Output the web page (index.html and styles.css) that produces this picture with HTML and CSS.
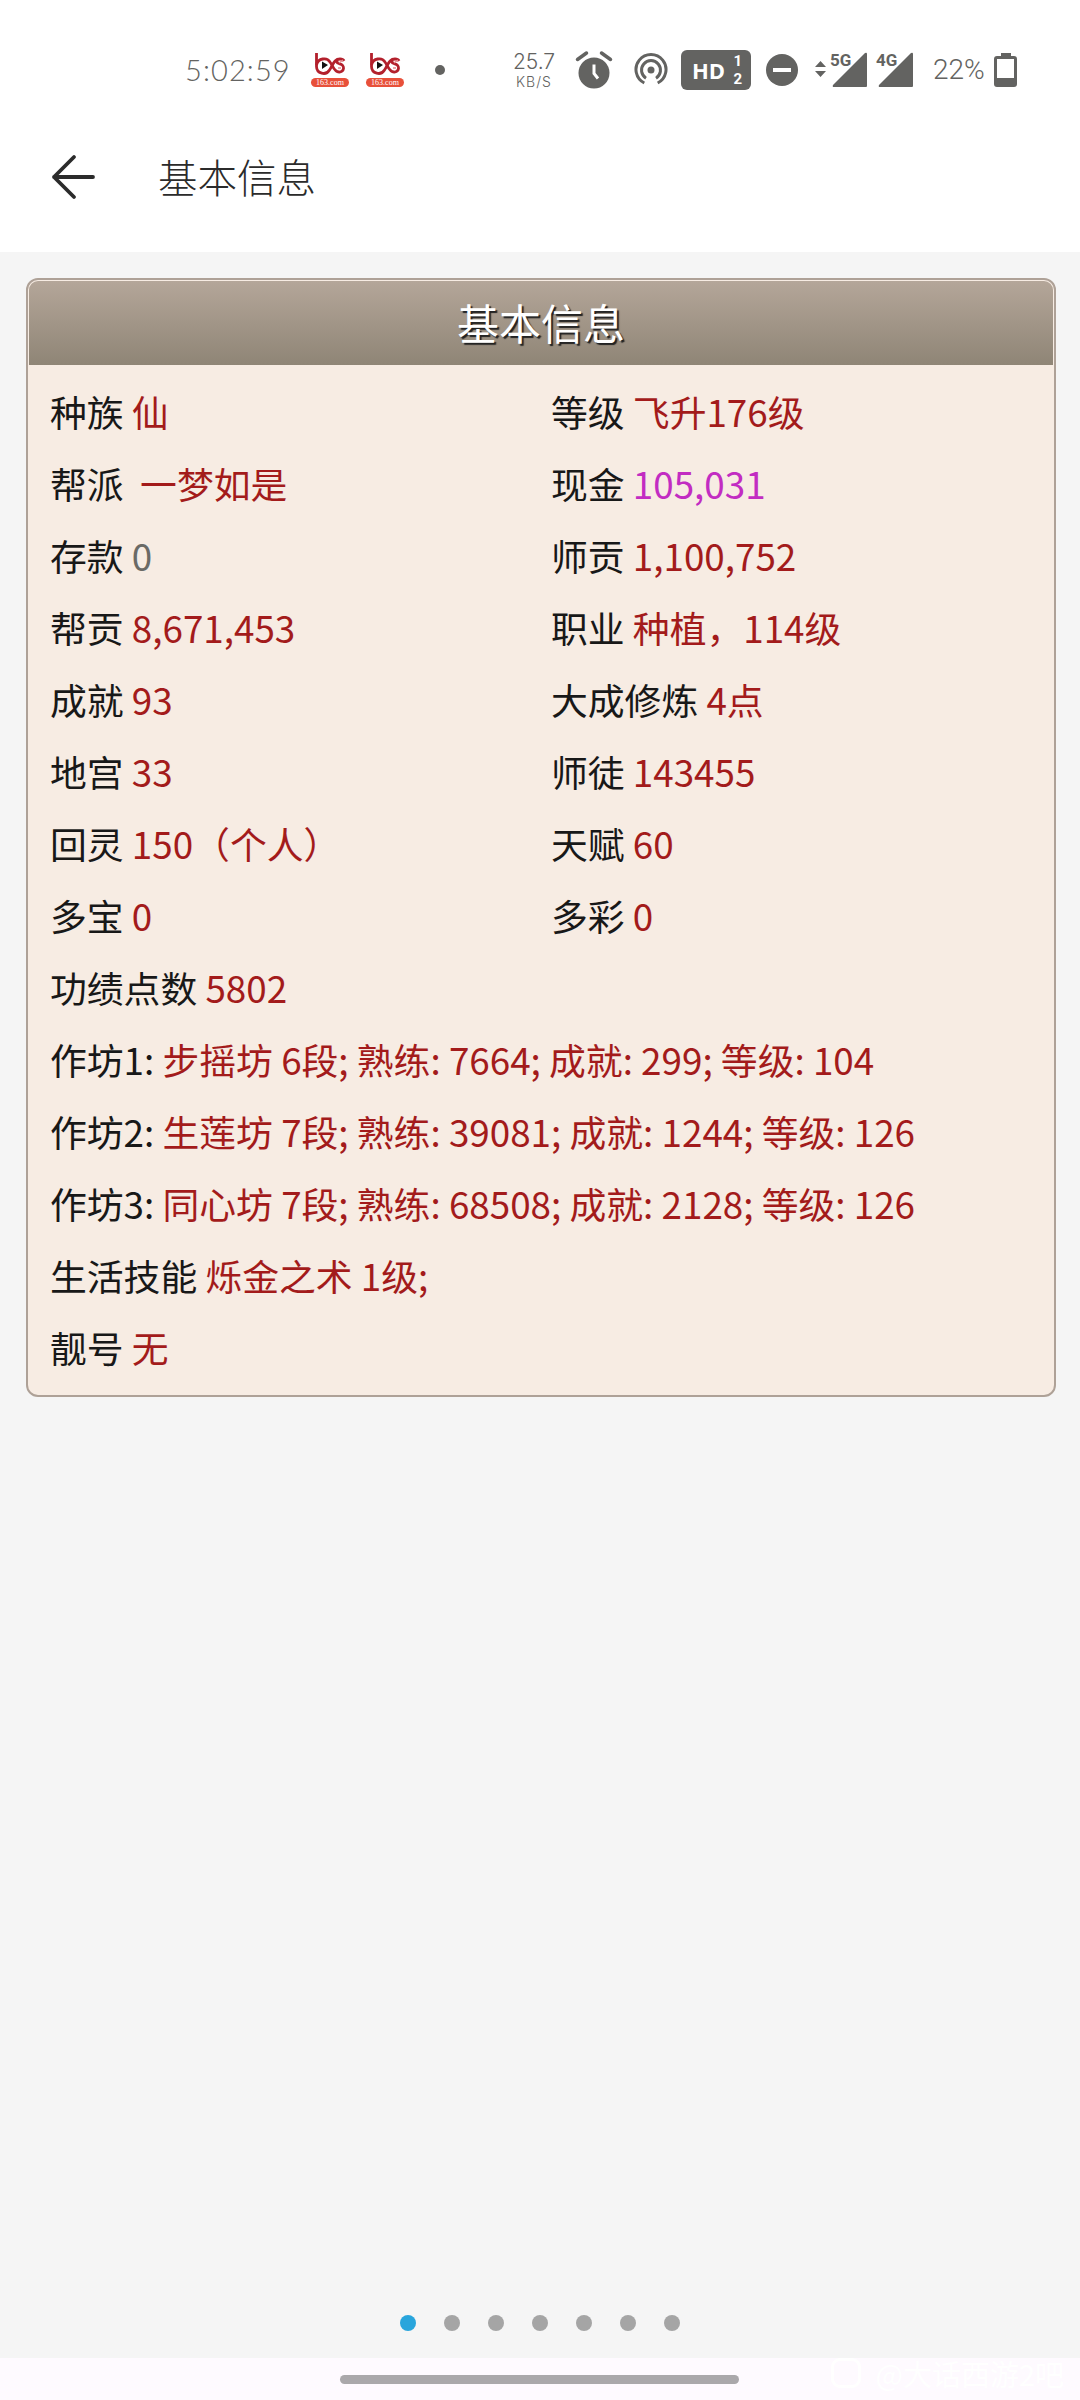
FILE: index.html
```html
<!DOCTYPE html>
<html lang="zh-CN">
<head>
  <meta charset="utf-8">
  <title>基本信息</title>
  <link rel="stylesheet" href="styles.css">
</head>
<body>
  <div class="status-bar">
    <span class="time">5:02:59</span>
    <svg class="app-icon" width="40" height="36" viewBox="0 0 40 36">
      <g fill="none" stroke="#b3202c" stroke-width="2.800">
        <path d="M6.500 1v13.500a7 7 0 0 0 13 3.500C23 13 24 7 30 7q3 0 4 2"/>
        <path d="M6.500 13C8 6 17 5 20 10c3 4 4 10 9 10a4 4 0 0 0 1-8q-3-1-4-3"/>
      </g>
      <path d="M12 9.500l6 3.500-6 4z" fill="#111"/>
      <path d="M29 11l4-3M28 16h3" stroke="#e58a90" stroke-width="1.500"/>
      <rect x="1" y="26" width="38" height="9" rx="4.500" fill="#e8503a"/>
      <text x="20" y="33" text-anchor="middle" class="app-name">163.com</text>
    </svg>
    <svg class="app-icon second" width="40" height="36" viewBox="0 0 40 36">
      <g fill="none" stroke="#b3202c" stroke-width="2.800">
        <path d="M6.500 1v13.500a7 7 0 0 0 13 3.500C23 13 24 7 30 7q3 0 4 2"/>
        <path d="M6.500 13C8 6 17 5 20 10c3 4 4 10 9 10a4 4 0 0 0 1-8q-3-1-4-3"/>
      </g>
      <path d="M12 9.500l6 3.500-6 4z" fill="#111"/>
      <path d="M29 11l4-3M28 16h3" stroke="#e58a90" stroke-width="1.500"/>
      <rect x="1" y="26" width="38" height="9" rx="4.500" fill="#e8503a"/>
      <text x="20" y="33" text-anchor="middle" class="app-name">163.com</text>
    </svg>
    <span class="more-dot"></span>
    <div class="speed"><span class="num">25.7</span><span class="unit">KB/S</span></div>
    <svg class="alarm" width="38" height="40" viewBox="0 0 38 40">
      <circle cx="19" cy="23" r="15.500" fill="#636361"/>
      <path d="M2.500 9.500L11.500 3M26.500 3l9 6.500" stroke="#636361" stroke-width="3.500" stroke-linecap="round"/>
      <path d="M19 14.500v9l4 5" fill="none" stroke="#fff" stroke-width="3"/>
    </svg>
    <svg class="hotspot" width="34" height="34" viewBox="0 0 34 34" fill="none" stroke="#636361" stroke-width="3">
      <path d="M10.300 30A15 15 0 1 1 23.700 30"/>
      <path d="M12 25.200A9.500 9.500 0 1 1 22 25.200"/>
      <circle cx="17" cy="17" r="3.500" fill="#636361" stroke="none"/>
    </svg>
    <div class="hd"><b>HD</b><span class="sims"><i>1</i><i>2</i></span></div>
    <span class="dnd"></span>
    <svg class="signal" width="102" height="46" viewBox="0 -5 102 46" fill="#636361">
      <path d="M0 15l5.500-6 5.500 6zM0 19h11l-5.500 6z"/>
      <path d="M52 2v32q0 1-1 1H19q-2 0-1-2L50 1q2-1 2 1z"/>
      <path d="M98 2v32q0 1-1 1H65q-2 0-1-2L96 1q2-1 2 1z"/>
      <text x="15" y="14" class="net">5G</text>
      <text x="61" y="14" class="net">4G</text>
    </svg>
    <span class="percent">22%</span>
    <svg class="battery" width="24" height="36" viewBox="0 0 24 36">
      <path d="M7 1h10v3h3q3 0 3 3v25q0 3-3 3H3q-3 0-3-3V7q0-3 3-3h4z" fill="#636361"/>
      <rect x="3" y="7" width="17" height="19" fill="#fff"/>
    </svg>
  </div>

  <div class="title-bar">
    <svg width="46" height="48" viewBox="0 0 46 48" fill="none" stroke="#2b2b2b" stroke-width="3.800" stroke-linecap="round" stroke-linejoin="round">
      <path d="M42 24H3M23 4L3 24l20 20"/>
    </svg>
    <span class="page-title">基本信息</span>
  </div>

  <div class="content">
    <div class="card">
      <h2>基本信息</h2>
      <div class="info">
        <div>种族 <em>仙</em></div>
        <div>等级 <em>飞升176级</em></div>
        <div>帮派 <em>&nbsp;一梦如是</em></div>
        <div>现金 <em class="purple">105,031</em></div>
        <div>存款 <em class="gray">0</em></div>
        <div>师贡 <em>1,100,752</em></div>
        <div>帮贡 <em>8,671,453</em></div>
        <div>职业 <em>种植，114级</em></div>
        <div>成就 <em>93</em></div>
        <div>大成修炼 <em>4点</em></div>
        <div>地宫 <em>33</em></div>
        <div>师徒 <em>143455</em></div>
        <div>回灵 <em>150（个人）</em></div>
        <div>天赋 <em>60</em></div>
        <div>多宝 <em>0</em></div>
        <div>多彩 <em>0</em></div>
        <div class="wide">功绩点数 <em>5802</em></div>
        <div class="wide">作坊1: <em>步摇坊 6段; 熟练: 7664; 成就: 299; 等级: 104</em></div>
        <div class="wide">作坊2: <em>生莲坊 7段; 熟练: 39081; 成就: 1244; 等级: 126</em></div>
        <div class="wide">作坊3: <em>同心坊 7段; 熟练: 68508; 成就: 2128; 等级: 126</em></div>
        <div class="wide">生活技能 <em>烁金之术 1级;</em></div>
        <div class="wide">靓号 <em>无</em></div>
      </div>
    </div>
    <div class="dots">
      <span class="active"></span><span></span><span></span><span></span><span></span><span></span><span></span>
    </div>
  </div>

  <div class="nav-bar">
    <span class="handle"></span>
    <div class="watermark"><span class="logo"></span>@大话西游2吧</div>
  </div>
</body>
</html>
```
FILE: styles.css
```css
* {
  box-sizing: border-box;
}
body {
  margin: 0;
  width: 1080px;
  height: 2400px;
  display: flex;
  flex-direction: column;
  overflow: hidden;
  background-color: #fff;
  font-family: "Noto Sans CJK SC", sans-serif;
}

/* status bar */
.status-bar {
  display: flex;
  align-items: center;
  height: 138px;
  padding: 2px 0 0 185px;
  color: #636361;
  flex: none;
}
.status-bar > * {
  flex: none;
}
.time {
  width: 125px;
  font: 300 29px/36px Lato, sans-serif;
  letter-spacing: 1.1px;
}
.app-icon {
  margin-right: 15px;
}
.app-icon.second {
  margin-right: 30px;
}
.app-name {
  font: 8px "Liberation Serif", serif;
  fill: #fff;
}
.more-dot {
  width: 10px;
  height: 10px;
  border-radius: 50%;
  background-color: #636361;
}
.speed {
  width: 42px;
  margin-left: 68px;
  display: flex;
  flex-direction: column;
  align-items: center;
}
.speed .num {
  font: 300 21px/22px Inter, sans-serif;
}
.speed .unit {
  font: 300 14px/17px Inter, sans-serif;
  letter-spacing: 1px;
}
.alarm {
  margin-left: 20px;
}
.hotspot {
  margin-left: 21px;
}
.hd {
  width: 70px;
  height: 40px;
  margin-left: 13px;
  padding: 0 9px 0 11px;
  border-radius: 6px;
  background-color: #636361;
  color: #fff;
  display: flex;
  align-items: center;
  justify-content: space-between;
  font-family: "Open Sans", sans-serif;
  font-size: 22px;
}
.sims {
  display: flex;
  flex-direction: column;
}
.sims i {
  font: bold 15px/18px Roboto, sans-serif;
}
.dnd {
  width: 32px;
  height: 32px;
  margin-left: 15px;
  border-radius: 50%;
  background: linear-gradient(#fff, #fff) center / 18px 4px no-repeat #636361;
}
.signal {
  margin-left: 17px;
}
.net {
  font: bold 17px Roboto, sans-serif;
}
.percent {
  width: 60px;
  margin-left: 16px;
  font: 300 28px/36px Roboto, sans-serif;
}
.battery {
  margin-left: 1px;
}

/* title bar */
.title-bar {
  display: flex;
  align-items: center;
  height: 114px;
  padding: 0 0 36px 51px;
  flex: none;
}
.page-title {
  margin: -3px 0 0 61px;
  color: #2b2b2b;
  font-size: 39.5px;
  line-height: 60px;
  font-weight: 300;
}

/* content */
.content {
  flex: 1;
  display: flex;
  flex-direction: column;
  justify-content: space-between;
  align-items: center;
  padding: 26px 0 27px;
  background-color: #f5f5f5;
}
.card {
  width: 1030px;
  margin-left: 2px;
  border: 2px solid #aea197;
  border-radius: 12px;
  background-color: #f7ece3;
  padding: 1px;
}
.card h2 {
  margin: 0;
  height: 84px;
  line-height: 81px;
  border-radius: 9px 9px 0 0;
  background: linear-gradient(#b4a699, #8f8576);
  color: #fff;
  font-size: 42px;
  font-weight: normal;
  text-align: center;
  text-shadow: 2px 2px 1px #222;
}
.info {
  display: grid;
  grid-template-columns: 501px 1fr;
  padding: 11px 0 10px 21px;
  color: #181818;
  font-size: 36.8px;
  line-height: 71px;
}
.info div {
  height: 72px;
  white-space: nowrap;
}
.info .wide {
  grid-column: 1 / 3;
}
.info em {
  font-style: normal;
  color: #a31b1b;
}
.info .purple {
  color: #c22cc2;
}
.info .gray {
  color: #6a6a66;
}

.dots {
  display: flex;
  gap: 28px;
}
.dots span {
  width: 16px;
  height: 16px;
  border-radius: 50%;
  background-color: #a5a5a5;
}
.dots .active {
  background-color: #29a5dc;
}

/* bottom gesture bar */
.nav-bar {
  position: relative;
  height: 42px;
  flex: none;
  display: flex;
  justify-content: center;
  align-items: center;
  padding-right: 2px;
  background-color: #fefaff;
}
.handle {
  width: 399px;
  height: 9px;
  border-radius: 5px;
  background-color: #aaa8ab;
}
.watermark {
  position: absolute;
  right: 16px;
  top: -3px;
  display: flex;
  align-items: center;
  gap: 14px;
  color: #fff;
  font-size: 29px;
  line-height: 36px;
}
.watermark .logo {
  width: 30px;
  height: 30px;
  border: 3px solid #fff;
  border-radius: 9px;
}
```
